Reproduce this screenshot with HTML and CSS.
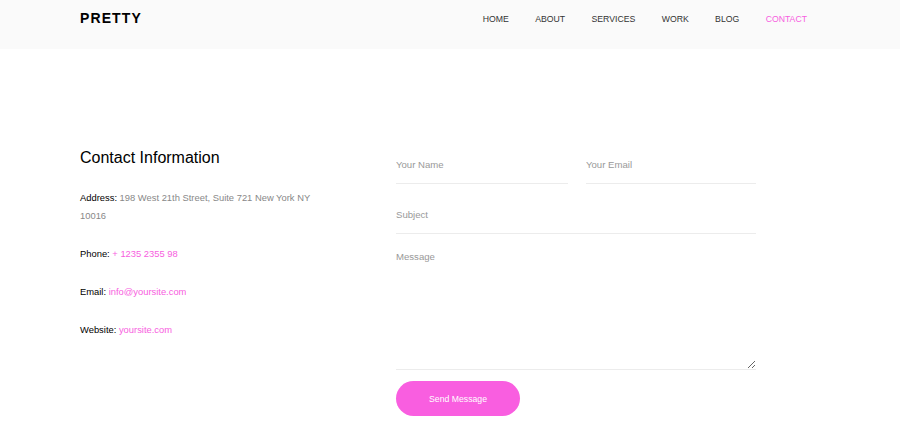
FILE: index.html
```html
<!DOCTYPE html>
<html lang="en">
<head>
    <meta charset="UTF-8">
    <meta name="viewport" content="width=device-width, initial-scale=1.0">
    <title>Contact - Pretty</title>
    <link rel="stylesheet" href="styles.css">
</head>
<body>
    <header class="header">
        <div class="container header-inner">
            <a class="logo" href="#">PRETTY</a>
            <nav class="nav">
                <a href="#">HOME</a>
                <a href="#">ABOUT</a>
                <a href="#">SERVICES</a>
                <a href="#">WORK</a>
                <a href="#">BLOG</a>
                <a href="#" class="active">CONTACT</a>
            </nav>
        </div>
    </header>

    <section class="contact">
        <div class="container contact-inner">
            <div class="info">
                <h2>Contact Information</h2>
                <p>Address:<span class="value"> 198 West 21th Street, Suite 721 New York NY 10016</span></p>
                <p>Phone: <a href="#">+ 1235 2355 98</a></p>
                <p>Email: <a href="#">info@yoursite.com</a></p>
                <p>Website: <a href="#">yoursite.com</a></p>
            </div>

            <form class="contact-form">
                <div class="form-row">
                    <input type="text" placeholder="Your Name">
                    <input type="email" placeholder="Your Email">
                </div>
                <input type="text" placeholder="Subject">
                <textarea placeholder="Message"></textarea>
                <button type="submit">Send Message</button>
            </form>
        </div>
    </section>
</body>
</html>
```

FILE: styles.css
```css
body {
    font-family: "Liberation Sans", Arial, sans-serif;
    margin: 0;
    padding: 0;
    background-color: #fff;
    color: #000;
}
.container {
    width: 740px;
    margin: 0 auto;
}
.header {
    background-color: #fafafa;
    height: 49px;
}
.header-inner {
    display: flex;
    justify-content: space-between;
    align-items: center;
    padding-top: 10px;
}
.logo {
    font-size: 14px;
    font-weight: bold;
    letter-spacing: 1.1px;
    color: #000;
    text-decoration: none;
}
.nav {
    display: flex;
    gap: 26.4px;
    padding-right: 13px;
    padding-top: 1px;
}
.nav a {
    font-size: 8.7px;
    color: #333;
    text-decoration: none;
}
.nav a.active {
    color: #f75ee0;
}
.contact {
    padding-top: 97px;
}
.contact-inner {
    display: flex;
}
.info {
    width: 245px;
    margin-right: 71px;
}
.info h2 {
    font-size: 16px;
    font-weight: normal;
    line-height: 22px;
    margin: 1px 0 20px;
}
.info p {
    font-size: 9.4px;
    line-height: 18px;
    margin: 0 0 20px;
}
.info .value {
    color: #888;
}
.info a {
    color: #f75ee0;
    text-decoration: none;
}
.contact-form {
    width: 360px;
    display: flex;
    flex-direction: column;
}
.form-row {
    display: grid;
    grid-template-columns: 172px 170px;
    gap: 18px;
}
input,
textarea {
    font-family: "Liberation Sans", Arial, sans-serif;
    font-size: 9.6px;
    border: none;
    border-bottom: 1px solid #ececec;
    padding: 0;
    outline: none;
    background: transparent;
    box-sizing: border-box;
    width: 100%;
}
input {
    height: 38px;
    margin-bottom: 12px;
}
textarea {
    height: 124px;
    padding-top: 5px;
    margin-bottom: 11px;
}
::placeholder {
    color: #999;
}
button {
    width: 124px;
    height: 35px;
    border: none;
    border-radius: 18px;
    background-color: #f95ee0;
    color: #fff;
    font-family: "Liberation Sans", Arial, sans-serif;
    font-size: 8.7px;
    cursor: pointer;
}
```
